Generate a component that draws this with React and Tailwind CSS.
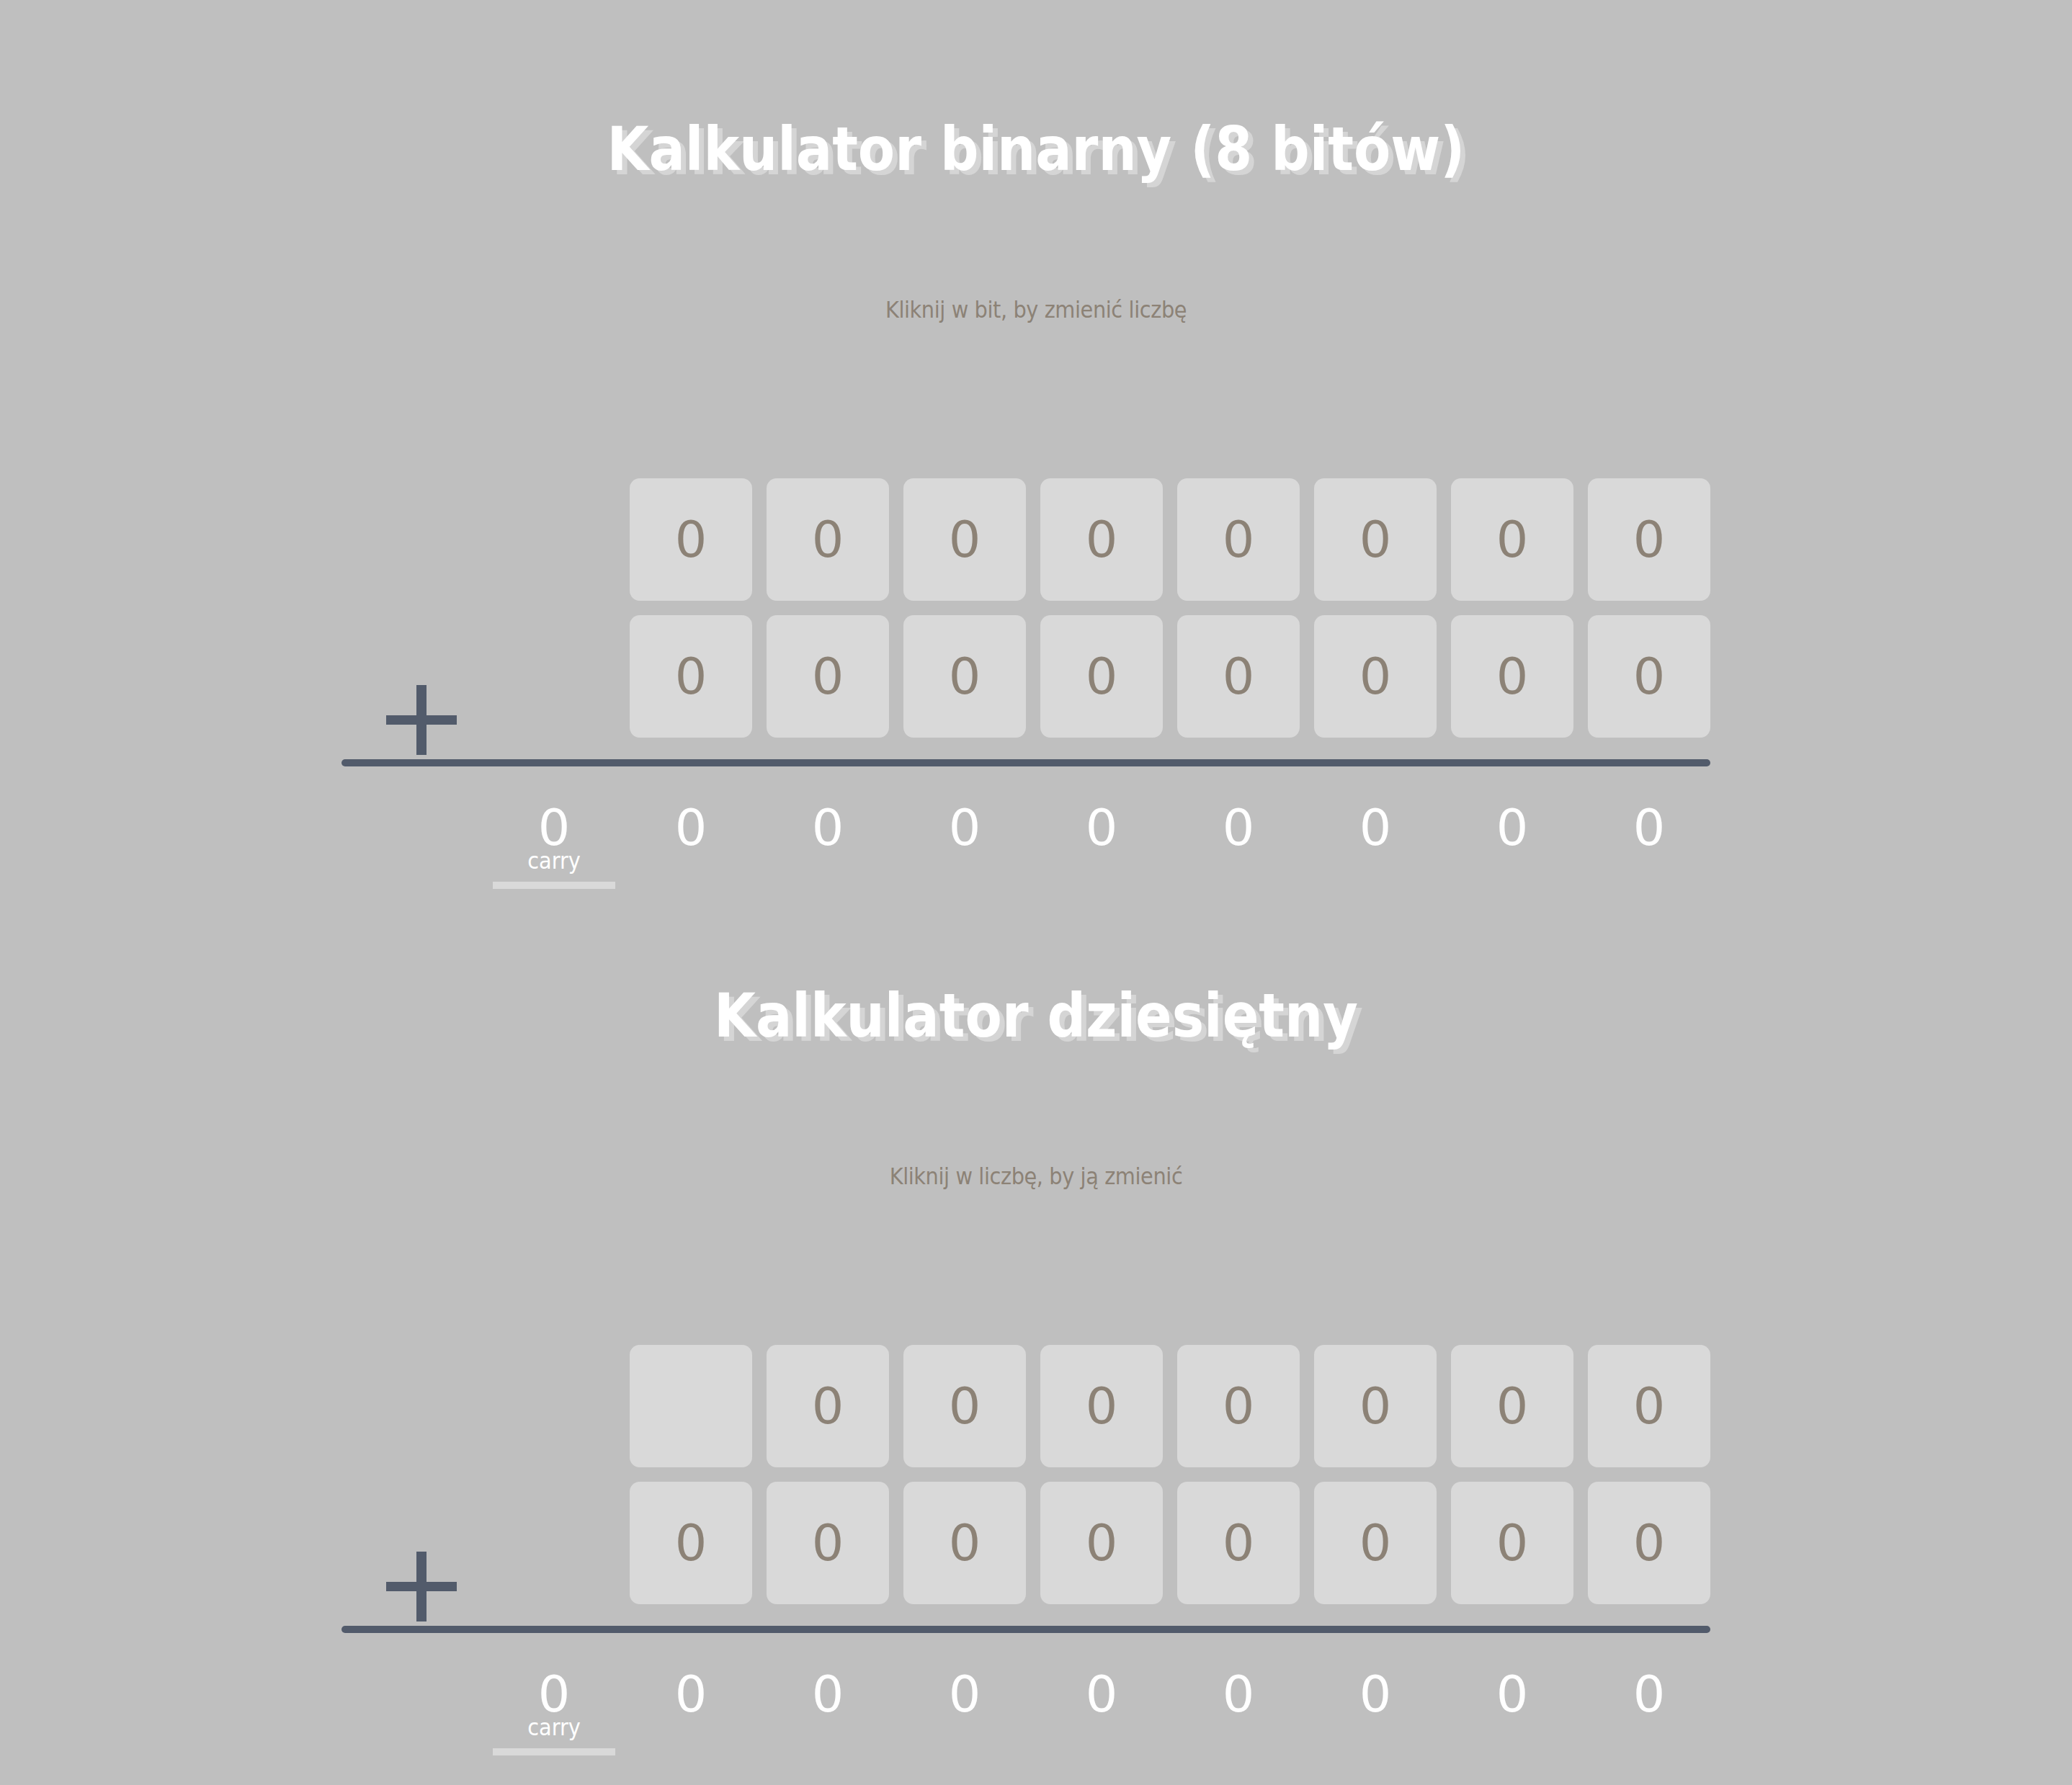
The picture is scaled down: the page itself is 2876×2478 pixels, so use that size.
import React from 'react';

// kolumny: carry + 8 bitów
const binTop = ['0', '0', '0', '0', '0', '0', '0', '0'];
const binBottom = ['0', '0', '0', '0', '0', '0', '0', '0'];
const binResult = ['0', '0', '0', '0', '0', '0', '0', '0'];

const decTop = ['', '0', '0', '0', '0', '0', '0', '0'];
const decBottom = ['0', '0', '0', '0', '0', '0', '0', '0'];
const decResult = ['0', '0', '0', '0', '0', '0', '0', '0'];

function Cell({ value }) {
  return (
    <div className="w-[170px] h-[170px] rounded-[14px] bg-[#d9d9d9] flex items-center justify-center text-[70px] leading-[70px] text-[#8c8276] [font-family:'DejaVu_Sans',sans-serif] cursor-pointer select-none">
      {value}
    </div>
  );
}

function Plus() {
  return (
    <svg className="ml-[62px] mb-[6px]" width="98" height="97" viewBox="0 0 98 97">
      <rect x="42" y="0" width="14" height="97" fill="#525b6b" />
      <rect x="0" y="42" width="98" height="13" fill="#525b6b" />
    </svg>
  );
}

function Calculator({ title, hint, top, bottom, result, carry, className = '' }) {
  return (
    <section className={className}>
      <h1 className="text-center text-[83px] leading-[83px] font-bold text-white [font-family:'DejaVu_Sans_Condensed','DejaVu_Sans',sans-serif] [font-stretch:semi-condensed] [text-shadow:7px_6px_0_#d5d5d5]">
        {title}
      </h1>
      <p className="mt-[165px] text-center text-[32px] leading-[32px] tracking-[-0.4px] text-[#8c8276] [font-family:'DejaVu_Sans_Condensed','DejaVu_Sans',sans-serif] [font-stretch:semi-condensed]">
        {hint}
      </p>

      <div className="mt-[218px] w-[1900px]">
        <div className="flex">
          <div className="w-[400px] flex items-end">
            <Plus />
          </div>
          <div className="flex flex-col gap-[20px] pb-[30px]">
            <div className="flex gap-[20px]">
              {top.map((v, i) => <Cell key={i} value={v} />)}
            </div>
            <div className="flex gap-[20px]">
              {bottom.map((v, i) => <Cell key={i} value={v} />)}
            </div>
          </div>
        </div>

        <div className="h-[10px] rounded-full bg-[#525b6b]" />

        {/* wynik */}
        <div className="mt-[50px] pl-[210px] flex gap-[20px] text-white">
          <div className="w-[170px] flex flex-col items-center">
            <span className="text-[70px] leading-[70px] [font-family:'DejaVu_Sans',sans-serif]">{carry}</span>
            <span className="text-[32px] leading-[22px] [font-family:'DejaVu_Sans_Condensed','DejaVu_Sans',sans-serif] [font-stretch:semi-condensed]">carry</span>
            <div className="mt-[18px] h-[10px] w-full bg-[#d9d9d9]" />
          </div>
          {result.map((v, i) => (
            <div key={i} className="w-[170px] text-center text-[70px] leading-[70px] [font-family:'DejaVu_Sans',sans-serif]">
              {v}
            </div>
          ))}
        </div>
      </div>
    </section>
  );
}

export default function App() {
  return (
    <div className="min-h-[2478px] bg-[#bfbfbf] pt-[166px]">
      <div className="w-[1928px] mx-auto">
        <Calculator
          title="Kalkulator binarny (8 bitów)"
          hint="Kliknij w bit, by zmienić liczbę"
          top={binTop}
          bottom={binBottom}
          result={binResult}
          carry="0"
        />
        <Calculator
          className="mt-[135px]"
          title="Kalkulator dziesiętny"
          hint="Kliknij w liczbę, by ją zmienić"
          top={decTop}
          bottom={decBottom}
          result={decResult}
          carry="0"
        />
      </div>
    </div>
  );
}
